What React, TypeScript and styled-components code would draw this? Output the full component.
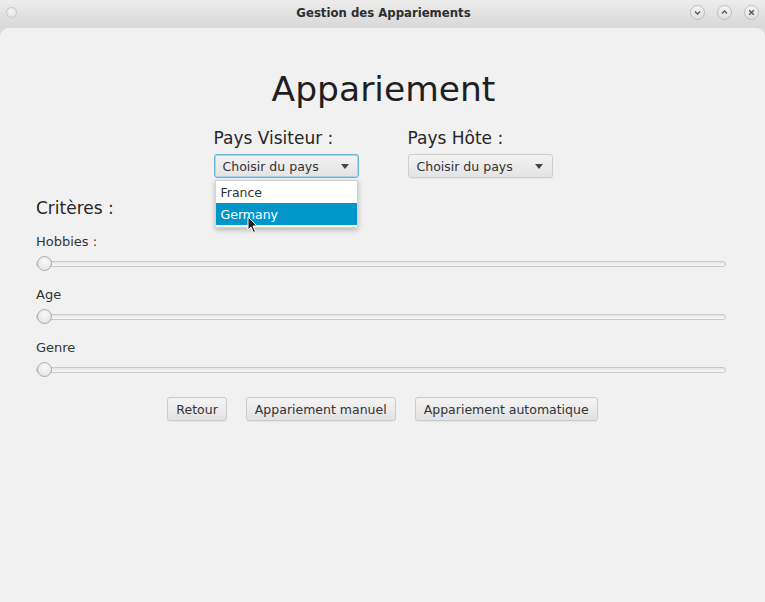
import React from "react";
import styled, { createGlobalStyle } from "styled-components";

const Global = createGlobalStyle`
  html, body { margin: 0; padding: 0; background: #d9d9d9; }
  body { font-family: "DejaVu Sans", "Liberation Sans", sans-serif; }
  * { box-sizing: border-box; }
`;

const Window = styled.div`
  width: 765px;
  height: 602px;
  display: flex;
  flex-direction: column;
  background: #dcdcdc;
  overflow: hidden;
`;

const TitleBar = styled.div`
  height: 28px;
  flex: none;
  display: grid;
  grid-template-columns: 80px 1fr 80px;
  align-items: center;
  background: linear-gradient(#ececec, #d8d8d8);
  padding: 0 6px 3px 6px;
`;

const TitleText = styled.div`
  text-align: center;
  font-family: "DejaVu Sans Condensed", "DejaVu Sans", sans-serif;
  font-weight: bold;
  font-size: 13px;
  color: #2e2e2e;
  padding-left: 2px;
`;

const Dot = styled.div`
  width: 11px;
  height: 11px;
  border-radius: 50%;
  background: radial-gradient(circle at 50% 40%, #f6f6f6, #dcdcdc);
  border: 1px solid #c8c8c8;
`;

const Controls = styled.div`
  display: flex;
  justify-content: flex-end;
  gap: 12px;
`;

const CtlBtn = styled.div`
  width: 15px;
  height: 15px;
  border-radius: 50%;
  border: 1px solid #bdbdbd;
  background: linear-gradient(#f4f4f4, #e0e0e0);
  display: flex;
  align-items: center;
  justify-content: center;
`;

const Content = styled.div`
  flex: 1;
  background: #f1f1f1;
  border-radius: 9px 9px 0 0;
  display: flex;
  flex-direction: column;
`;

const Heading = styled.h1`
  margin: 39px 0 0 0;
  text-align: center;
  font-weight: normal;
  font-size: 34.5px;
  line-height: 44px;
  color: #1f1f1f;
  padding-left: 2px;
`;

const CountryRow = styled.div`
  margin-top: 17px;
  display: flex;
  justify-content: center;
  gap: 49px;
  padding-left: 1px;
`;

const CountryCol = styled.div`
  position: relative;
  display: flex;
  flex-direction: column;
  gap: 6px;
`;

const BigLabel = styled.div`
  font-size: 17px;
  line-height: 20px;
  color: #262626;
`;

const Combo = styled.div<{ $focused?: boolean }>`
  width: 145px;
  height: 24px;
  border-radius: 3px;
  display: flex;
  align-items: center;
  justify-content: space-between;
  padding: 0 8px 0 8px;
  font-size: 12.5px;
  color: #333;
  background: linear-gradient(#f3f3f3, #e3e3e3);
  border: 1px solid ${(p) => (p.$focused ? "#6bb3d6" : "#cdcdcd")};
  box-shadow: ${(p) => (p.$focused ? "0 0 0 1px #a9d6ec inset" : "0 1px 1px rgba(0,0,0,0.05)")};
`;

const Arrow = styled.span`
  width: 0;
  height: 0;
  border-left: 4px solid transparent;
  border-right: 4px solid transparent;
  border-top: 5px solid #444;
  margin-right: 1px;
`;

const DropList = styled.div`
  position: absolute;
  left: 1px;
  top: 52px;
  width: 143px;
  background: #fff;
  border: 1px solid #d4d4d4;
  box-shadow: 0 2px 5px rgba(0, 0, 0, 0.25);
  padding-bottom: 2px;
  z-index: 2;
`;

const Option = styled.div<{ $selected?: boolean }>`
  height: 22px;
  display: flex;
  align-items: center;
  padding-left: 5px;
  font-size: 12.5px;
  color: ${(p) => (p.$selected ? "#fff" : "#333")};
  background: ${(p) => (p.$selected ? "#0096c9" : "transparent")};
`;

const Criteria = styled.div`
  margin-top: 20px;
  padding: 0 39px 0 36px;
  display: flex;
  flex-direction: column;
`;

const SmallLabel = styled.div<{ $first?: boolean }>`
  font-size: 13px;
  line-height: 16px;
  color: #333;
  margin-top: ${(p) => (p.$first ? "16px" : "14px")};
`;

const SliderTrack = styled.div`
  position: relative;
  margin-top: 11px;
  height: 6px;
  border-radius: 3px;
  border: 1px solid #c9c9c9;
  background: linear-gradient(#e4e4e4, #f9f9f9);
  margin-bottom: 6px;
`;

const Thumb = styled.div`
  position: absolute;
  left: 0;
  top: -6px;
  width: 15px;
  height: 15px;
  border-radius: 50%;
  border: 1px solid #a9a9a9;
  background: radial-gradient(circle at 50% 35%, #fafafa, #dedede);
`;

const ButtonRow = styled.div`
  margin-top: 18px;
  display: flex;
  justify-content: center;
  gap: 19px;
`;

const Button = styled.div`
  height: 24px;
  padding: 0 8px;
  display: flex;
  align-items: center;
  font-size: 12.5px;
  color: #333;
  border-radius: 3px;
  border: 1px solid #cbcbcb;
  background: linear-gradient(#f4f4f4, #e2e2e2);
  box-shadow: 0 1px 1px rgba(0, 0, 0, 0.06);
`;

const Cursor = styled.svg`
  position: absolute;
  left: 33px;
  top: 88px;
  z-index: 3;
`;

function Slider() {
  return (
    <SliderTrack>
      <Thumb />
    </SliderTrack>
  );
}

export default function App() {
  return (
    <Window>
      <Global />
      <TitleBar>
        <Dot />
        <TitleText>Gestion des Appariements</TitleText>
        <Controls>
          <CtlBtn>
            <svg width="7" height="7" viewBox="0 0 7 7">
              <path d="M1 2.5 L3.5 5 L6 2.5" fill="none" stroke="#555" strokeWidth="1.3" />
            </svg>
          </CtlBtn>
          <CtlBtn>
            <svg width="7" height="7" viewBox="0 0 7 7">
              <path d="M1 4.5 L3.5 2 L6 4.5" fill="none" stroke="#555" strokeWidth="1.3" />
            </svg>
          </CtlBtn>
          <CtlBtn>
            <svg width="7" height="7" viewBox="0 0 7 7">
              <path d="M1.2 1.2 L5.8 5.8 M5.8 1.2 L1.2 5.8" fill="none" stroke="#555" strokeWidth="1.4" />
            </svg>
          </CtlBtn>
        </Controls>
      </TitleBar>
      <Content>
        <Heading>Appariement</Heading>
        <CountryRow>
          <CountryCol>
            <BigLabel>Pays Visiteur :</BigLabel>
            <Combo $focused>
              <span>Choisir du pays</span>
              <Arrow />
            </Combo>
            <DropList>
              <Option>France</Option>
              <Option $selected>Germany</Option>
            </DropList>
            <Cursor width="12" height="18" viewBox="0 0 12 18">
              <path d="M1 1 L1 14 L4 11 L6.5 16.5 L8.5 15.5 L6 10 L10 10 Z" fill="#222" stroke="#fff" strokeWidth="1" />
            </Cursor>
          </CountryCol>
          <CountryCol>
            <BigLabel>Pays Hôte :</BigLabel>
            <Combo>
              <span>Choisir du pays</span>
              <Arrow />
            </Combo>
          </CountryCol>
        </CountryRow>
        <Criteria>
          <BigLabel>Critères :</BigLabel>
          <SmallLabel $first>Hobbies :</SmallLabel>
          <Slider />
          <SmallLabel>Age</SmallLabel>
          <Slider />
          <SmallLabel>Genre</SmallLabel>
          <Slider />
        </Criteria>
        <ButtonRow>
          <Button>Retour</Button>
          <Button>Appariement manuel</Button>
          <Button>Appariement automatique</Button>
        </ButtonRow>
      </Content>
    </Window>
  );
}
